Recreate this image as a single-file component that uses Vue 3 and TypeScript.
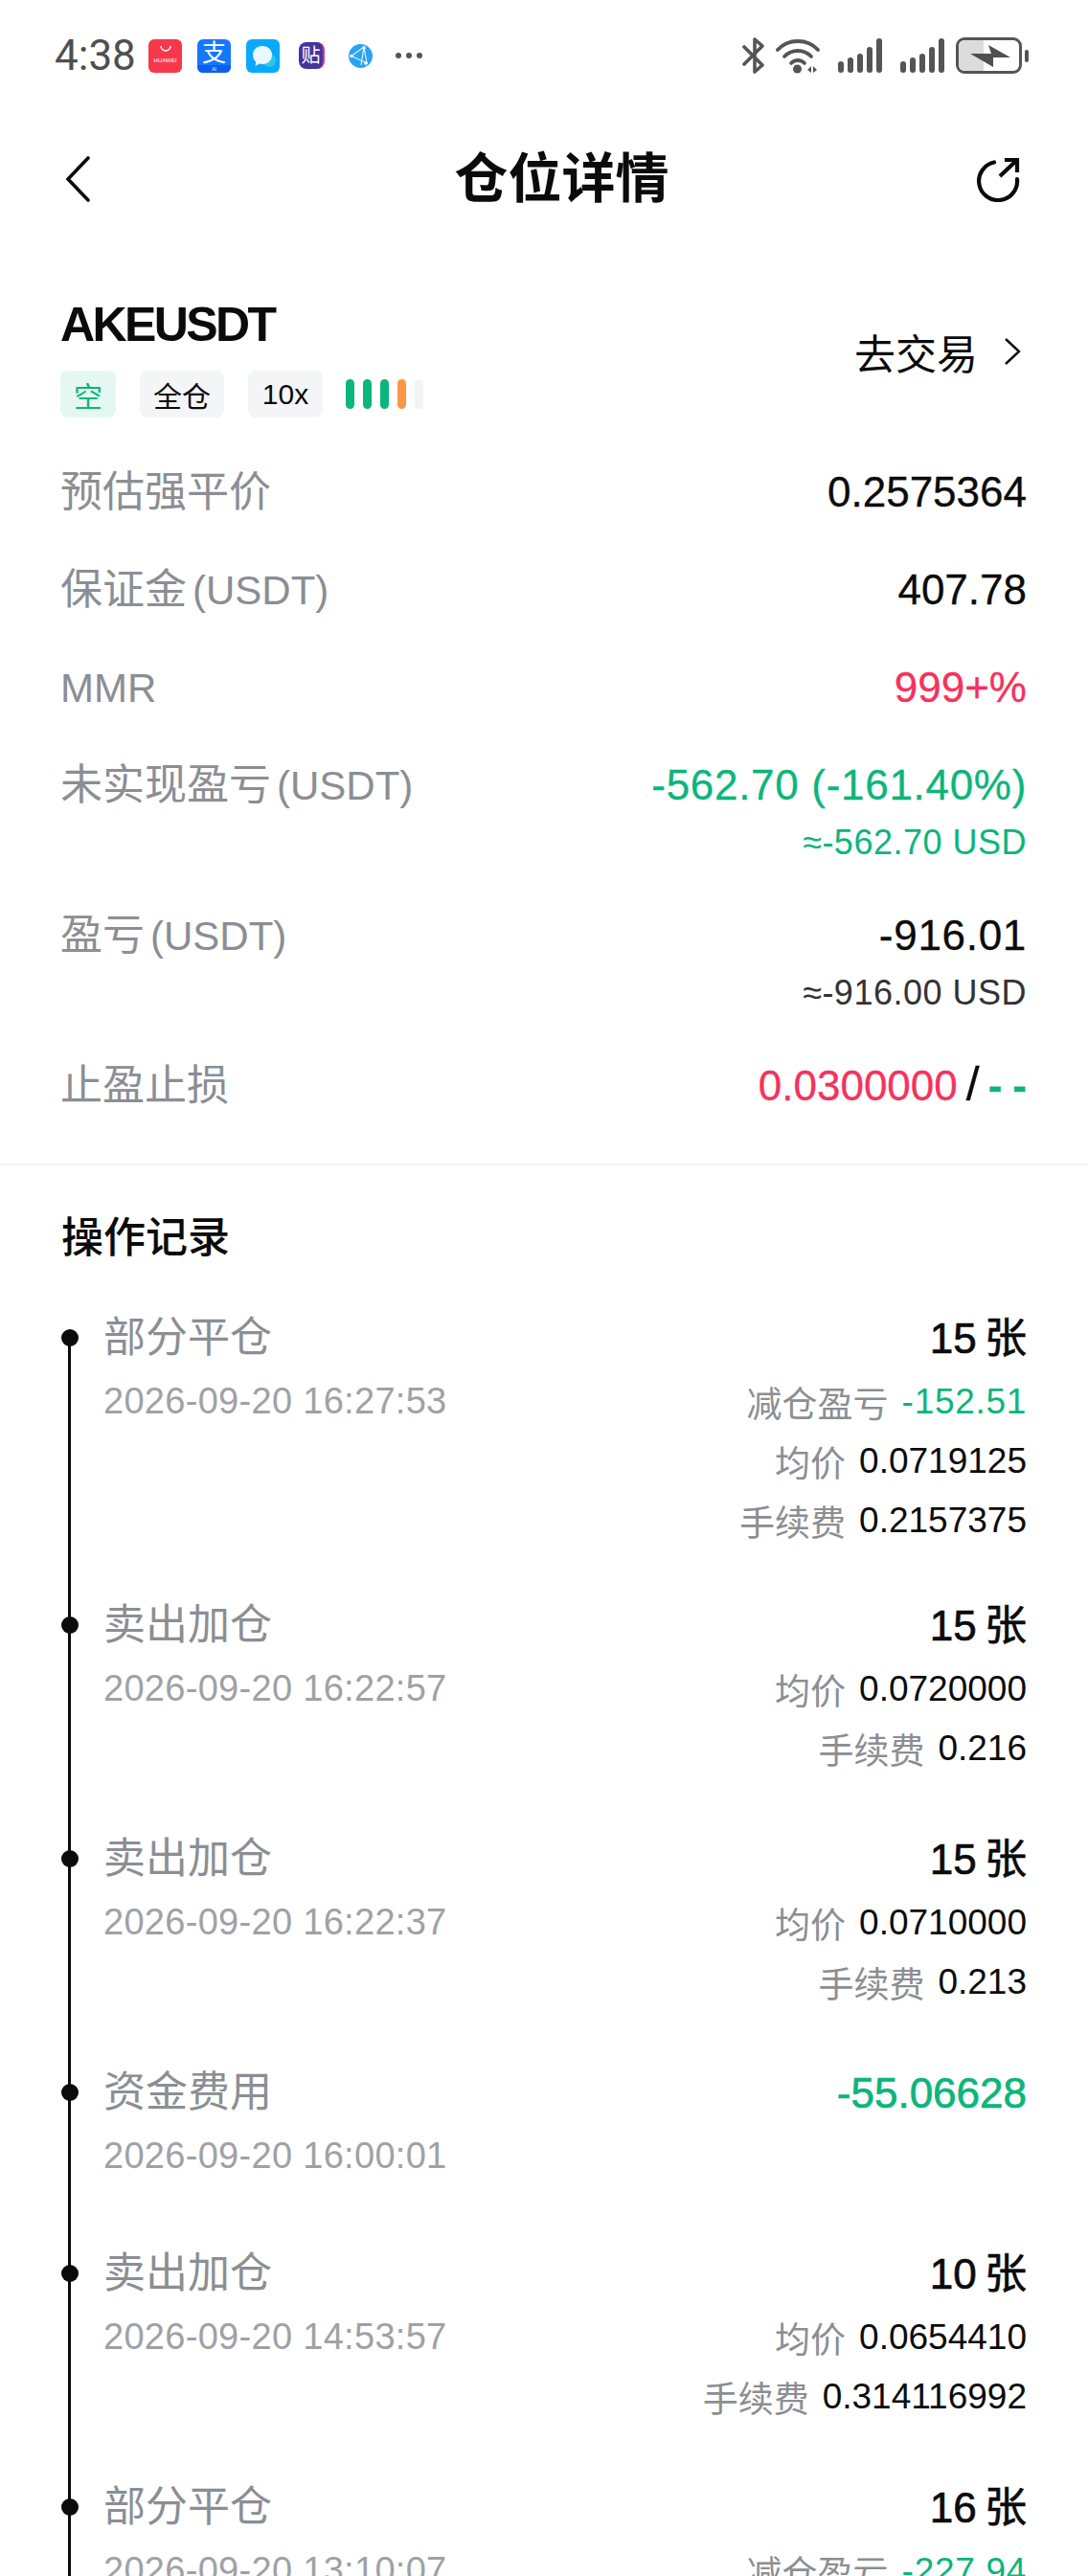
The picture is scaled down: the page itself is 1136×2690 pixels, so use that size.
<script setup lang="ts">
type Row = { label: string; unit?: string; value: string; tone?: string; sub?: string; wide?: boolean };
type Detail = { label: string; value: string; tone?: string };
type Record = { title: string; time: string; amount: string; tone?: string; details: Detail[] };

const rows: Row[] = [
  { label: '预估强平价', value: '0.2575364' },
  { label: '保证金', unit: '(USDT)', value: '407.78' },
  { label: '', unit: 'MMR', value: '999+%', tone: 'red' },
  { label: '未实现盈亏', unit: '(USDT)', value: '-562.70 (-161.40%)', tone: 'green', sub: '≈-562.70 USD', wide: true },
  { label: '盈亏', unit: '(USDT)', value: '-916.01', sub: '≈-916.00 USD', wide: true },
];

const records: Record[] = [
  {
    title: '部分平仓', time: '2026-09-20 16:27:53', amount: '15 张',
    details: [
      { label: '减仓盈亏', value: '-152.51', tone: 'green' },
      { label: '均价', value: '0.0719125' },
      { label: '手续费', value: '0.2157375' },
    ],
  },
  {
    title: '卖出加仓', time: '2026-09-20 16:22:57', amount: '15 张',
    details: [
      { label: '均价', value: '0.0720000' },
      { label: '手续费', value: '0.216' },
    ],
  },
  {
    title: '卖出加仓', time: '2026-09-20 16:22:37', amount: '15 张',
    details: [
      { label: '均价', value: '0.0710000' },
      { label: '手续费', value: '0.213' },
    ],
  },
  { title: '资金费用', time: '2026-09-20 16:00:01', amount: '-55.06628', tone: 'green', details: [] },
  {
    title: '卖出加仓', time: '2026-09-20 14:53:57', amount: '10 张',
    details: [
      { label: '均价', value: '0.0654410' },
      { label: '手续费', value: '0.314116992' },
    ],
  },
  {
    title: '部分平仓', time: '2026-09-20 13:10:07', amount: '16 张',
    details: [{ label: '减仓盈亏', value: '-227.94', tone: 'green' }],
  },
];

const riskBars = ['on', 'on', 'on', 'warn', 'off'];
</script>

<template>
  <div class="page">
    <!-- Status bar -->
    <div class="status">
      <div class="status-left">
        <span class="clock">4:38</span>
        <span class="app app-huawei">
          <svg viewBox="0 0 20 8" class="huawei-arc"><path d="M5 1a5 5 0 0 0 10 0" fill="none" stroke="#fff" stroke-width="1.4" /></svg>
          <span class="huawei-text">HUAWEI</span>
        </span>
        <span class="app app-alipay">支<span class="alipay-ai">AI</span></span>
        <span class="app app-msg">
          <svg viewBox="0 0 35 35" width="35" height="35">
            <circle cx="24" cy="22" r="7" fill="#2fc4e8" />
            <path d="M17 7c-6 0-10 4-10 9.500 0 3 1.200 5.400 3.200 7l-.7 4.500 4.500-2.400c1 .3 2 .4 3 .4 6 0 10-4 10-9.500S23 7 17 7z" fill="#e9f8ff" />
          </svg>
        </span>
        <span class="app-tie">贴</span>
        <span class="app-net">
          <svg viewBox="0 0 25 25" width="25" height="25">
            <circle cx="12.500" cy="12.500" r="12.500" fill="#2aa3f0" />
            <path d="M3 12.500 16 3l3 17zM16 3l-3 19" fill="none" stroke="#d8f1ff" stroke-width="1.200" />
            <circle cx="3" cy="12.500" r="1.800" fill="#fff" />
            <circle cx="16" cy="4" r="1.800" fill="#fff" />
            <circle cx="18" cy="20" r="1.800" fill="#fff" />
          </svg>
        </span>
        <span class="more"><i></i><i></i><i></i></span>
      </div>
      <div class="status-right">
        <svg class="bt" viewBox="0 0 23 38" width="23" height="38">
          <path d="M2 10l19 19-8 7V2l8 7L2 28" fill="none" stroke="#555" stroke-width="3.600" stroke-linejoin="round" stroke-linecap="round" />
        </svg>
        <svg class="wifi" viewBox="0 0 46 38" width="46" height="38">
          <g fill="none" stroke="#555" stroke-width="3.800" stroke-linecap="round">
            <path d="M2 13C13 1 33 1 44 13" />
            <path d="M9 20c8-8 20-8 28 0" />
            <path d="M16 27c4-4 10-4 14 0" />
          </g>
          <circle cx="22.500" cy="33" r="4.500" fill="#555" />
          <path d="M37 30v7l-4-3zM39 30v7l4-3z" fill="#555" />
        </svg>
        <span class="signal"><i></i><i></i><i></i><i></i><i></i></span>
        <span class="signal"><i></i><i></i><i></i><i></i><i></i></span>
        <span class="battery">
          <span class="battery-body">
            <span class="battery-level"></span>
            <svg viewBox="0 0 44 26" width="44" height="26" class="bolt">
              <path d="M1 11 23 11 20 2 43 15 25 15 25 25z" fill="#4f4f4f" />
            </svg>
          </span>
          <span class="battery-nub"></span>
        </span>
      </div>
    </div>

    <!-- Nav -->
    <div class="nav">
      <svg viewBox="0 0 28 48" width="28" height="48">
        <path d="M25 2 4 24l21 22" fill="none" stroke="#0b0b0b" stroke-width="3.600" stroke-linecap="round" />
      </svg>
      <span class="nav-title">仓位详情</span>
      <svg viewBox="0 0 48 48" width="48" height="48">
        <path d="M20 6.500A20 20 0 1 0 44 24" fill="none" stroke="#0b0b0b" stroke-width="4.200" stroke-linecap="round" />
        <path d="M26 21 44 4M31 4h13v13" fill="none" stroke="#0b0b0b" stroke-width="4.200" />
      </svg>
    </div>

    <!-- Position -->
    <div class="position">
      <div class="symbol-row">
        <div>
          <div class="symbol">AKEUSDT</div>
          <div class="tags">
            <span class="tag tag-short">空</span>
            <span class="tag">全仓</span>
            <span class="tag tag-lev">10x</span>
            <span class="risk">
              <i v-for="(b, i) in riskBars" :key="i" :class="b"></i>
            </span>
          </div>
        </div>
        <div class="trade">
          去交易
          <svg viewBox="0 0 18 30" width="18" height="30">
            <path d="M2 2l14 13L2 28" fill="none" stroke="#0b0b0b" stroke-width="2.400" />
          </svg>
        </div>
      </div>

      <div v-for="r in rows" :key="r.value" class="row" :class="{ 'row-sub': r.sub }">
        <span class="row-label"><span v-if="r.label" class="cn">{{ r.label }}</span><span v-if="r.unit" class="unit">{{ r.unit }}</span></span>
        <div class="row-right">
          <div class="row-value" :class="[r.tone, { wide: r.wide }]">{{ r.value }}</div>
          <div v-if="r.sub" class="row-note" :class="r.tone">{{ r.sub }}</div>
        </div>
      </div>

      <div class="row">
        <span class="row-label">止盈止损</span>
        <div class="row-value tpsl"><span class="red">0.0300000</span><span class="slash">/</span><span class="green dashes">--</span></div>
      </div>
    </div>

    <!-- Records -->
    <div class="records">
      <div class="records-title">操作记录</div>
      <div class="timeline">
        <div v-for="(rec, i) in records" :key="i" class="record">
          <span class="dot"></span>
          <div class="record-left">
            <div class="record-name">{{ rec.title }}</div>
            <div class="record-time">{{ rec.time }}</div>
          </div>
          <div class="record-right">
            <div class="record-amount" :class="rec.tone">{{ rec.amount }}</div>
            <div v-for="d in rec.details" :key="d.label" class="detail">
              <span class="detail-label">{{ d.label }}</span>
              <span class="detail-value" :class="[d.tone, { wide: d.tone }]">{{ d.value }}</span>
            </div>
          </div>
        </div>
      </div>
    </div>
  </div>
</template>

<style>
html, body { background: #fff; }
</style>

<style scoped>
.page {
  width: 1136px;
  height: 2690px;
  overflow: hidden;
  background: #fff;
  color: #0b0b0b;
  font-family: "Liberation Sans", "Noto Sans CJK SC", sans-serif;
}

/* status bar */
.status {
  display: flex;
  justify-content: space-between;
  align-items: center;
  height: 38px;
  padding: 39px 62px 0 57px;
}
.status-left, .status-right { display: flex; align-items: center; }
.clock {
  width: 98px;
  font-family: Roboto, sans-serif;
  font-size: 44px;
  color: #4f4f4f;
}
.app {
  display: flex;
  flex-direction: column;
  align-items: center;
  position: relative;
  width: 35px;
  height: 35px;
  margin-right: 16px;
  border-radius: 6px;
  overflow: hidden;
}
.app-huawei { background: #f7384a; color: #fff; }
.huawei-arc { width: 20px; height: 8px; margin-top: 6px; }
.huawei-text { font-size: 6px; line-height: 8px; margin-top: 4px; }
.app-alipay {
  background: #1677ff;
  color: #fff;
  font-size: 25px;
  line-height: 29px;
}
.alipay-ai {
  position: absolute;
  left: 0;
  right: 0;
  bottom: 0;
  height: 8px;
  background: #0b5ff0;
  font-size: 5px;
  line-height: 8px;
  text-align: center;
}
.app-msg { background: #0aa8ff; }
.app-tie {
  width: 27px;
  height: 28px;
  margin: 0 25px 0 4px;
  border-radius: 8px;
  background: #47339c;
  border-right: 2px solid #d83b7b;
  box-sizing: border-box;
  color: #fff;
  font-size: 20px;
  line-height: 28px;
  text-align: center;
}
.app-net { display: flex; margin-right: 24px; }
.more { display: flex; gap: 5px; }
.more i { width: 6px; height: 6px; border-radius: 50%; background: #555; }
.bt { margin-right: 12px; }
.wifi { margin-right: 19px; }
.signal {
  display: flex;
  align-items: flex-end;
  gap: 4px;
  height: 36px;
  margin-right: 19px;
}
.signal i { width: 6px; border-radius: 3px; background: #555; }
.signal i:nth-child(1) { height: 12px; }
.signal i:nth-child(2) { height: 16px; }
.signal i:nth-child(3) { height: 20px; }
.signal i:nth-child(4) { height: 27px; }
.signal i:nth-child(5) { height: 36px; }
.signal:nth-of-type(2) { margin-right: 12px; }
.battery { display: flex; align-items: center; gap: 3px; }
.battery-body {
  position: relative;
  box-sizing: border-box;
  width: 69px;
  height: 38px;
  border: 3px solid #555;
  border-radius: 9px;
  overflow: hidden;
}
.battery-level {
  position: absolute;
  left: 0;
  top: 0;
  bottom: 0;
  width: 26px;
  background: #dcdcdc;
}
.bolt { position: absolute; left: 11px; top: 3px; }
.battery-nub { width: 4px; height: 13px; border-radius: 2px; background: #555; }

/* nav */
.nav {
  display: flex;
  justify-content: space-between;
  align-items: center;
  height: 64px;
  margin-top: 78px;
  padding: 0 70px 0 67px;
}
.nav-title {
  margin-left: 60px;
  font-size: 56px;
  font-weight: 700;
  line-height: 64px;
}

/* position */
.position { padding: 0 64px 7px 63px; }
.symbol-row {
  display: flex;
  justify-content: space-between;
  align-items: center;
  margin: 92px 0 50px;
}
.symbol {
  font-size: 50px;
  font-weight: 700;
  letter-spacing: -2.600px;
  line-height: 56px;
}
.tags { display: flex; align-items: center; gap: 25px; margin-top: 20px; }
.tag {
  display: flex;
  align-items: center;
  justify-content: center;
  height: 49px;
  padding: 0 14px;
  border-radius: 8px;
  background: #f4f5f7;
  font-size: 30px;
}
.tag-short { background: #e4f8f1; color: #0cb57b; }
.tag-lev { width: 78px; box-sizing: border-box; padding: 0; }
.risk { display: flex; gap: 9px; margin-left: -1px; }
.risk i { width: 9px; height: 31px; border-radius: 5px; }
.risk .on { background: #0cb57b; }
.risk .warn { background: #ff9645; }
.risk .off { background: #f2f3f5; }
.trade {
  display: flex;
  align-items: center;
  gap: 27px;
  font-size: 43px;
  padding: 0 6px 14px 0;
}

.row {
  display: flex;
  justify-content: space-between;
  align-items: flex-start;
  height: 102px;
}
.row-sub { height: 157px; }
.row-label {
  font-size: 44px;
  line-height: 56px;
  color: #8b8e93;
}
.unit { font-size: 42px; }
.cn + .unit { margin-left: 6px; }
.row-right { text-align: right; }
.row-value {
  font-size: 44px;
  line-height: 56px;
  -webkit-text-stroke: 0.3px currentColor;
}
.tpsl { white-space: nowrap; }
.wide { letter-spacing: 0.7px; }
.row-note {
  margin-top: 10px;
  font-size: 36px;
  letter-spacing: 0.5px;
  line-height: 44px;
  color: #333;
}
.green { color: #0cb57b !important; }
.red { color: #f5325c !important; }
.slash { margin: 0 9px; font-size: 50px; line-height: 50px; }
.dashes { font-weight: 700; letter-spacing: 11px; margin-right: -11px; }

/* records */
.records { border-top: 2px solid #f2f3f5; padding: 0 64px; }
.records-title {
  margin-top: 49px;
  font-size: 44px;
  line-height: 54px;
  font-weight: 500;
}
.timeline { position: relative; margin-top: 52px; }
.timeline::before {
  content: "";
  position: absolute;
  left: 7px;
  top: 20px;
  bottom: -200px;
  width: 3px;
  background: #0b0b0b;
}
.record {
  position: relative;
  display: flex;
  justify-content: space-between;
  padding-left: 44px;
  padding-bottom: 59px;
}
.record:first-child { padding-bottom: 53px; }
.dot {
  position: absolute;
  left: 0;
  top: 16px;
  width: 18px;
  height: 18px;
  border-radius: 50%;
  background: #0b0b0b;
}
.record-left { min-height: 130px; }
.record-name {
  font-size: 44px;
  line-height: 50px;
  color: #8b8e93;
}
.record-time {
  margin-top: 16px;
  font-size: 38px;
  letter-spacing: 0.3px;
  line-height: 50px;
  color: #a0a1a5;
}
.record-right { text-align: right; }
.record-amount {
  font-size: 44px;
  word-spacing: -4px;
  line-height: 52px;
  -webkit-text-stroke: 0.7px currentColor;
}
.detail {
  display: flex;
  justify-content: flex-end;
  align-items: center;
  gap: 14px;
  height: 62px;
}
.record-amount + .detail { margin-top: 9px; }
.detail-label { font-size: 37px; color: #8b8e93; }
.detail-value { font-size: 37px; }
</style>
